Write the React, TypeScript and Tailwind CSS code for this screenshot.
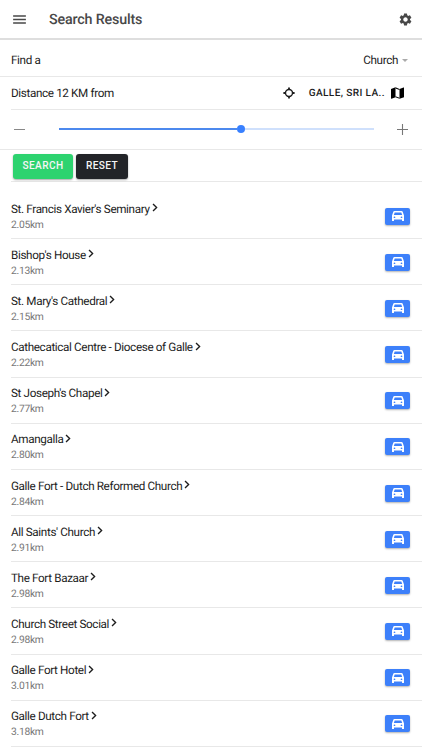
import { MdMenu, MdSettings } from "react-icons/md";

const places = [
  { name: "St. Francis Xavier's Seminary", distance: "2.05km" },
  { name: "Bishop's House", distance: "2.13km" },
  { name: "St. Mary's Cathedral", distance: "2.15km" },
  { name: "Cathecatical Centre - Diocese of Galle", distance: "2.22km" },
  { name: "St Joseph's Chapel", distance: "2.77km" },
  { name: "Amangalla", distance: "2.80km" },
  { name: "Galle Fort - Dutch Reformed Church", distance: "2.84km" },
  { name: "All Saints' Church", distance: "2.91km" },
  { name: "The Fort Bazaar", distance: "2.98km" },
  { name: "Church Street Social", distance: "2.98km" },
  { name: "Galle Fort Hotel", distance: "3.01km" },
  { name: "Galle Dutch Fort", distance: "3.18km" },
];

function CarIcon() {
  return (
    <svg viewBox="0 0 24 20" className="h-[10px] w-[12px]" fill="currentColor">
      <path
        fillRule="evenodd"
        d="M5 0h14q2 0 2.600 2L24 9v10q0 1-1 1h-2q-1 0-1-1v-2H4v2q0 1-1 1H1q-1 0-1-1V9l2.400-7Q3 0 5 0Zm.4 3L3.700 8h16.600L18.600 3ZM5 10.800a1.700 1.700 0 1 0 0 3.400 1.700 1.700 0 0 0 0-3.400Zm14 0a1.700 1.700 0 1 0 0 3.400 1.700 1.700 0 0 0 0-3.400Z"
      />
    </svg>
  );
}

function ChevronIcon() {
  return (
    <svg
      viewBox="0 0 6 10"
      className="mb-[3px] ml-[2px] h-[9px] w-[6px]"
      fill="none"
      stroke="currentColor"
      strokeWidth="1.500"
    >
      <path d="M.8 1 4.800 5 .8 9" />
    </svg>
  );
}

function LocateIcon() {
  return (
    <svg viewBox="0 0 12 12" className="size-[12px]" fill="none" stroke="currentColor">
      <circle cx="6" cy="6" r="3.500" strokeWidth="1.400" />
      <path d="M6 .4v1.600M6 10v1.600M.4 6h1.600M10 6h1.600" strokeWidth="1.800" />
    </svg>
  );
}

function MapIcon() {
  return (
    <svg viewBox="0 0 13 12" className="ml-[6px] h-[12px] w-[13px] text-black" fill="currentColor">
      <path d="M0 2 4.500.3v9.900L.5 11.700 0 11.500ZM8.500 2.100 12.500.4l.5.200v9.600l-4.500 1.600Z" />
      <path d="M4.500.3 8.500 2v1L4.500 1.500ZM4.500 9.200l4 1.500v1.100l-4-1.500Z" />
    </svg>
  );
}

export default function App() {
  return (
    <div className="h-[750px] w-full overflow-hidden bg-white font-[Roboto,sans-serif] text-[11.7px] tracking-[-0.36px] text-[#1d1d1d] [text-rendering:geometricPrecision]">
      <header className="flex h-[40px] items-center border-b-2 border-[#dedede] pl-[11px] pr-[9px] text-[#484848]">
        <MdMenu className="size-[17px]" />
        <h1 className="ml-[21px] flex-1 pt-[3px] text-[14.3px] font-medium tracking-[-0.17px]">Search Results</h1>
        <MdSettings className="size-[15px]" />
      </header>

      <div className="flex h-[37px] items-center justify-between border-b border-[#e8e8e8] pl-[11px] pr-[14px]">
        <span className="pt-[6px]">Find a</span>
        <span className="flex items-center pt-[6px]">
          Church
          <span className="ml-[4px] border-x-[3px] border-t-[3px] border-x-transparent border-t-[#aaa]" />
        </span>
      </div>

      <div className="ml-[11px] flex h-[33px] items-center border-b border-[#e8e8e8] pr-[18px]">
        <span className="flex-1 pt-[1px]">Distance 12 KM from</span>
        <LocateIcon />
        <span className="ml-[14px] pt-[1px] text-[10.1px] font-medium tracking-[0.38px]">GALLE, SRI LA..</span>
        <MapIcon />
      </div>

      <div className="flex h-[40px] items-center border-b border-[#e8e8e8] pb-[1px] pl-[14px] pr-[14px]">
        <span className="h-px w-[11px] bg-[#888]" />
        <div className="ml-[34px] mr-[23px] flex flex-1 items-center">
          <span className="h-[2px] w-[178px] bg-[#4c89ee]" />
          <span className="size-[8px] rounded-full bg-[#3880ff]" />
          <span className="h-[2px] flex-1 bg-[#cfe0fc]" />
        </div>
        <svg viewBox="0 0 11 11" className="size-[11px]" stroke="#777" strokeWidth="1.100">
          <path d="M5.500 0v11M0 5.500h11" />
        </svg>
      </div>

      <div className="ml-[11px] flex h-[32px] items-center gap-[3px] border-b border-[#e8e8e8] pl-[2px] pt-[1px] text-[10.1px] font-medium tracking-[0.38px] text-[#f5f5f5]">
        <button className="h-[25px] w-[60px] rounded-[3px] bg-[#2dd36f] shadow-[0_1px_2px_rgba(0,0,0,0.35)]">
          SEARCH
        </button>
        <button className="h-[25px] w-[52px] rounded-[3px] bg-[#222428] shadow-[0_1px_2px_rgba(0,0,0,0.35)]">
          RESET
        </button>
      </div>

      <ul className="ml-[11px] pt-[11px]">
        {places.map((place) => (
          <li
            key={place.name}
            className="flex h-[46.170px] items-center justify-between border-b border-[#e8e8e8] pr-[12px]"
          >
            <div className="pt-[2px]">
              <div className="flex h-[15px] items-center leading-[15px]">
                {place.name}
                <ChevronIcon />
              </div>
              <div className="text-[10.3px] leading-[15px] tracking-[-0.3px] text-[#777]">{place.distance}</div>
            </div>
            <button className="mt-[1px] flex h-[17px] w-[25px] items-center justify-center rounded-[2px] bg-[#3d80fa] text-white shadow-[0_1px_2px_rgba(0,0,0,0.3)]">
              <CarIcon />
            </button>
          </li>
        ))}
      </ul>
    </div>
  );
}
